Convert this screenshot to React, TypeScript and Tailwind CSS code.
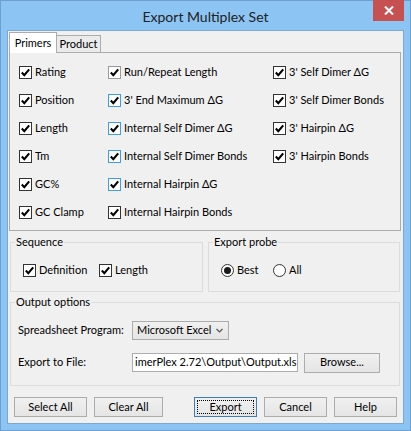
import React from 'react';

const FONT = "font-['Lato','Noto_Sans',sans-serif]";

type Tone = 'dark' | 'blue' | 'faint';

const CheckBox: React.FC<{ label: string; tone?: Tone }> = ({ label, tone = 'dark' }) => {
    const border =
        tone === 'blue' ? 'border-[#3d9cf0]' : tone === 'faint' ? 'border-[#9a9a9a]' : 'border-[#333333]';
    return (
        <div className="flex items-center gap-[3px]">
            <span className={`w-[13px] h-[13px] border ${border} bg-white flex items-center justify-center shrink-0`}>
                <svg width="11" height="11" viewBox="0 0 11 11">
                    <polyline points="1.8,5.6 4.3,8.2 9.2,2.4" fill="none" stroke="#000" strokeWidth="2.1" />
                </svg>
            </span>
            <span className="whitespace-nowrap">{label}</span>
        </div>
    );
};

const Radio: React.FC<{ label: string; checked?: boolean }> = ({ label, checked }) => (
    <div className="flex items-center gap-[3px]">
        <span className="w-[13px] h-[13px] rounded-full border border-[#333333] bg-white flex items-center justify-center shrink-0">
            {checked && <span className="w-[7px] h-[7px] rounded-full bg-[#1a1a1a]" />}
        </span>
        <span className="whitespace-nowrap">{label}</span>
    </div>
);

const Button: React.FC<{ label: string; className?: string; focused?: boolean }> = ({ label, className = '', focused }) => (
    <button
        className={`h-[20px] border ${focused ? 'border-[#3c7fb1]' : 'border-[#acacac]'} bg-gradient-to-b from-[#f0f0f0] to-[#e5e5e5] flex items-center justify-center p-[2px] ${className}`}
    >
        <span className={`w-full h-full flex items-center justify-center whitespace-nowrap ${focused ? 'outline-1 outline-dotted outline-black -outline-offset-1' : ''}`}>
            {label}
        </span>
    </button>
);

const GroupBox: React.FC<{ title: string; className?: string; children: React.ReactNode }> = ({ title, className = '', children }) => (
    <fieldset className={`border border-[#dcdcdc] ${className}`}>
        <legend className="ml-[4px] px-[1px] leading-[14px] whitespace-nowrap">{title}</legend>
        {children}
    </fieldset>
);

const rows: [string, string, Tone, string | null][] = [
    ['Rating', 'Run/Repeat Length', 'faint', "3' Self Dimer ΔG"],
    ['Position', "3' End Maximum ΔG", 'blue', "3' Self Dimer Bonds"],
    ['Length', 'Internal Self Dimer ΔG', 'blue', "3' Hairpin ΔG"],
    ['Tm', 'Internal Self Dimer Bonds', 'blue', "3' Hairpin Bonds"],
    ['GC%', 'Internal Hairpin ΔG', 'blue', null],
    ['GC Clamp', 'Internal Hairpin Bonds', 'dark', null],
];

export default function App() {
    return (
        <div className={`w-[411px] h-[431px] bg-[#8cc4f3] border border-[#6e9fd2] flex flex-col text-[11px] text-black ${FONT}`}>
            {/* title bar */}
            <div className="relative h-[29px] flex items-center justify-center">
                <span className="text-[14px] text-[#222222] mt-[1px] whitespace-nowrap">Export Multiplex Set</span>
                <div className="absolute top-[-1px] right-[6px] w-[31px] h-[21px] bg-[#c75050] flex items-center justify-center">
                    <svg width="10" height="9" viewBox="0 0 10 9">
                        <path d="M1 0.5 L9 8.5 M9 0.5 L1 8.5" stroke="#fff" strokeWidth="2" />
                    </svg>
                </div>
            </div>

            {/* client area */}
            <div className="ml-[6px] w-[397px] h-[394px] border border-[#7ea8d3] bg-[#f0f0f0] flex flex-col">
                {/* tabs */}
                <div className="flex items-end mt-[1px] ml-[1px]">
                    <div className="relative z-10 -mb-px h-[21px] w-[48px] bg-white border border-b-0 border-[#acacac] flex items-center justify-center whitespace-nowrap">
                        Primers
                    </div>
                    <div className="h-[17px] w-[44px] bg-[#ebebeb] border border-l-0 border-b-0 border-[#acacac] flex items-center justify-center whitespace-nowrap">
                        Product
                    </div>
                </div>
                <div className="ml-[1px] w-[392px] h-[179px] border border-[#acacac] pt-[5px] pl-[9px]">
                    {rows.map(([a, b, tone, c]) => (
                        <div key={a} className="flex h-[28px] items-center">
                            <div className="w-[89px]">
                                <CheckBox label={a} />
                            </div>
                            <div className="w-[165px]">
                                <CheckBox label={b} tone={tone} />
                            </div>
                            {c && <CheckBox label={c} />}
                        </div>
                    ))}
                </div>

                {/* sequence / export probe */}
                <div className="flex mt-[4px] ml-[2px] gap-[5px]">
                    <GroupBox title="Sequence" className="w-[193px] h-[57px]">
                        <div className="flex items-center h-[20px] mt-[11px] pl-[12px]">
                            <div className="w-[76px]">
                                <CheckBox label="Definition" />
                            </div>
                            <CheckBox label="Length" />
                        </div>
                    </GroupBox>
                    <GroupBox title="Export probe" className="w-[192px] h-[57px]">
                        <div className="flex items-center h-[20px] mt-[11px] pl-[12px]">
                            <div className="w-[52px]">
                                <Radio label="Best" checked />
                            </div>
                            <Radio label="All" />
                        </div>
                    </GroupBox>
                </div>

                {/* output options */}
                <GroupBox title="Output options" className="mt-[3px] ml-[2px] w-[390px] h-[91px]">
                    <div className="pl-[7px] mt-[12px] flex flex-col gap-[13px]">
                        <div className="flex items-center h-[19px]">
                            <span className="w-[114px] whitespace-nowrap">Spreadsheet Program:</span>
                            <div className="w-[97px] h-[19px] border border-[#acacac] bg-gradient-to-b from-[#f0f0f0] to-[#e5e5e5] flex items-center pl-[4px] pr-[5px] justify-between">
                                <span className="whitespace-nowrap">Microsoft Excel</span>
                                <svg width="7" height="5" viewBox="0 0 7 5">
                                    <path d="M0.5 1 L3.5 4 L6.5 1" fill="none" stroke="#555" strokeWidth="1.2" />
                                </svg>
                            </div>
                        </div>
                        <div className="flex items-center h-[19px]">
                            <span className="w-[114px] whitespace-nowrap">Export to File:</span>
                            <div className="w-[166px] h-[19px] border border-[#acacac] bg-white flex items-center pl-[2px] overflow-hidden">
                                <span className="whitespace-nowrap">imerPlex 2.72\Output\Output.xls</span>
                            </div>
                            <Button label="Browse..." className="ml-[6px] w-[76px] h-[19px]" />
                        </div>
                    </div>
                </GroupBox>

                {/* buttons */}
                <div className="flex mt-[11px] pl-[6px]">
                    <Button label="Select All" className="w-[73px]" />
                    <Button label="Clear All" className="ml-[7px] w-[69px]" />
                    <Button label="Export" focused className="ml-[31px] w-[63px]" />
                    <Button label="Cancel" className="ml-[7px] w-[63px]" />
                    <Button label="Help" className="ml-[7px] w-[63px]" />
                </div>
            </div>
        </div>
    );
}
